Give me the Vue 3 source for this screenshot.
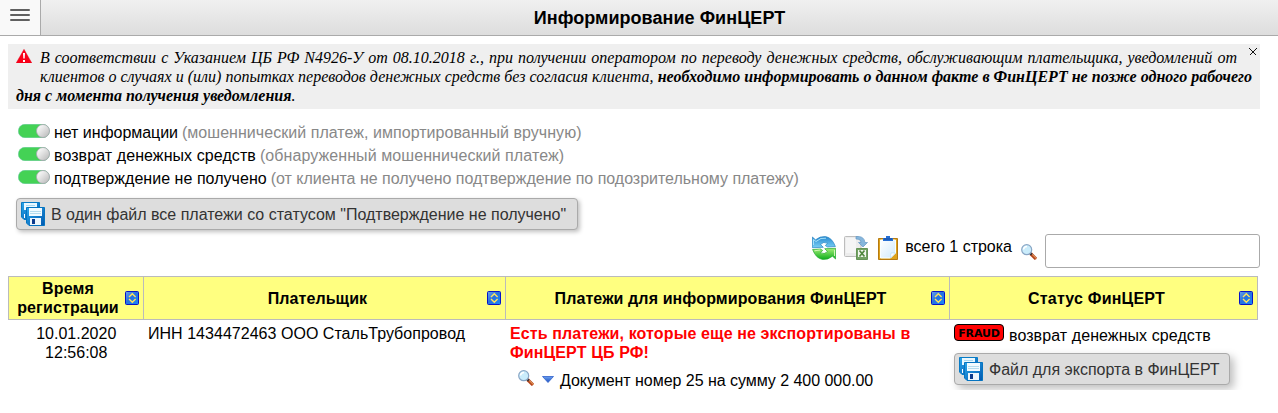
<script setup>
const filters = [
  { label: 'нет информации', hint: '(мошеннический платеж, импортированный вручную)', name: 'info' },
  { label: 'возврат денежных средств', hint: '(обнаруженный мошеннический платеж)', name: 'refund' },
  { label: 'подтверждение не получено', hint: '(от клиента не получено подтверждение по подозрительному платежу)', name: 'unconfirmed' },
]
const columns = [
  { title: 'Время регистрации', name: 'h-time' },
  { title: 'Плательщик', name: 'h-payer' },
  { title: 'Платежи для информирования ФинЦЕРТ', name: 'h-payments' },
  { title: 'Статус ФинЦЕРТ', name: 'h-status' },
]
</script>

<template>
  <svg class="defs" width="0" height="0">
    <defs>
      <linearGradient id="gBlue" x1="0" y1="0" x2="1" y2="1">
        <stop offset="0" stop-color="#2aa6ea" /><stop offset="1" stop-color="#0058b0" />
      </linearGradient>
      <linearGradient id="gSky" x1="0" y1="0" x2="0" y2="1">
        <stop offset="0" stop-color="#2687cf" /><stop offset="1" stop-color="#7ad0f6" />
      </linearGradient>
      <linearGradient id="gGreen" x1="0" y1="0" x2="0" y2="1">
        <stop offset="0" stop-color="#a5ee78" /><stop offset="1" stop-color="#0cae1c" />
      </linearGradient>
      <linearGradient id="gPaper" x1="0" y1="0" x2="1" y2="1">
        <stop offset="0" stop-color="#ffffff" /><stop offset="1" stop-color="#cfeafc" />
      </linearGradient>
      <linearGradient id="gSort" x1="0" y1="0" x2="1" y2="1">
        <stop offset="0" stop-color="#70a4e4" /><stop offset=".45" stop-color="#2772e0" /><stop offset="1" stop-color="#1587fb" />
      </linearGradient>
      <linearGradient id="gArrow" x1="0" y1="0" x2="0" y2="1">
        <stop offset="0" stop-color="#6ba0f0" /><stop offset="1" stop-color="#1c50c0" />
      </linearGradient>
      <linearGradient id="gKnob" x1="0" y1="0" x2="1" y2="1">
        <stop offset=".1" stop-color="#fdfdfd" /><stop offset=".5" stop-color="#dedede" /><stop offset="1" stop-color="#b4b4b4" />
      </linearGradient>
      <symbol id="save" viewBox="0 0 24 24">
        <path d="M.5.5h18v17H3L.5 15z" fill="url(#gBlue)" stroke="#087bc5" />
        <path d="M3 1h13v7H3z" fill="#e9f8ff" />
        <path d="M5 3.500h9" stroke="#a9d9f0" />
        <path d="M3.500 12v4" stroke="#fff" />
        <path d="M5.500 5.500h18v18H8l-2.500-2.500z" fill="url(#gBlue)" stroke="#0674c0" />
        <path d="M8 6h13v8H8z" fill="#f2fbff" />
        <path d="M9 9.500h11M9 11.500h11" stroke="#b4dcee" />
        <path d="M9 16h11v7H9z" fill="#edf6fc" />
        <path d="M11 17h3v5h-3z" fill="#0b3a8c" />
      </symbol>
      <symbol id="lens" viewBox="0 0 16 16">
        <path d="m9.500 9.500 5.500 5.500" stroke="#b5441c" stroke-width="3.200" />
        <path d="m10.500 9.800 5 5" stroke="#f1b36c" stroke-width="1" />
        <path d="m8.800 8.800 2 2" stroke="#34343c" stroke-width="2.200" />
        <circle cx="5.700" cy="5.700" r="5" fill="#caecfb" stroke="#89a6c5" stroke-width="1.200" />
        <path d="M2.500 5.500q.5-3 3.500-3" stroke="#fff" stroke-width="1.500" fill="none" />
      </symbol>
    </defs>
  </svg>

  <header class="bar">
    <div class="menu"><i></i><i></i><i></i></div>
    <h1>Информирование ФинЦЕРТ</h1>
  </header>

  <main>
    <div class="notice">
      <svg class="warn" viewBox="0 0 16 14"><path d="M8 .3 15.800 14H.2z" fill="#fa0019" stroke="#e00018" stroke-width=".4" /><path d="M7 4h2l-.3 5.500H7.300zM7 11h2v2H7z" fill="#fff" /></svg>
      <svg class="close" viewBox="0 0 8 8"><path d="m.5.5 7 7m0-7-7 7" stroke="#111" fill="none" shape-rendering="crispEdges" /></svg>
      В соответствии с Указанием ЦБ РФ N4926-У от 08.10.2018 г., при получении оператором по переводу денежных средств, обслуживающим плательщика, уведомлений от клиентов о случаях и (или) попытках переводов денежных средств без согласия клиента, <b>необходимо информировать о данном факте в ФинЦЕРТ не позже одного рабочего дня с момента получения уведомления</b>.
    </div>

    <div class="filters">
      <div v-for="f in filters" :key="f.name" class="filter" :class="f.name">
        <svg class="toggle" viewBox="0 0 32 14">
          <rect x=".3" y=".3" width="31" height="13.400" rx="6.700" fill="#44d255" stroke="#65c99a" stroke-width=".6" />
          <circle cx="25" cy="7" r="6.500" fill="url(#gKnob)" stroke="#a5a5ad" stroke-width=".8" />
        </svg>
        <span>{{ f.label }}</span><em>{{ f.hint }}</em>
      </div>
    </div>

    <button class="btn all"><svg class="disk"><use href="#save" /></svg>В один файл все платежи со статусом "Подтверждение не получено"</button>

    <div class="tools">
      <svg class="refresh" viewBox="0 0 24 24">
        <path d="M.4 1 3.500 3.800Q8 0 13.500.6 20 1.500 23.400 10.500L15.500 11l-2.200-1.500 2.300-2.200Q11.500 5 8.500 8.500l2.800 2.800L.4 11.700z" fill="url(#gSky)" stroke="#2885c3" stroke-width=".7" />
        <path d="M23.600 23l-3.100-2.800Q16 24 10.500 23.400 4 22.500.6 13.500L8.500 13l2.200 1.500-2.300 2.200q4.100 2.300 7.100-1.200l-2.800-2.800 10.900-.4z" fill="url(#gGreen)" stroke="#24a832" stroke-width=".7" />
        <path d="M1.500 9V3.500l2.500 2Q9 1 14 2.200" fill="none" stroke="#a6e2fa" />
        <path d="M2.500 14.800 8 14M22.500 14v6" fill="none" stroke="#d0f8b4" />
      </svg>
      <svg class="excel" viewBox="0 0 24 24">
        <path d="M.5 1.500q0-1 1-1H14l3 5v15H1.500q-1 0-1-1z" fill="#ececec" stroke="#bdbdbd" />
        <path d="M2 2h10v15H2z" fill="#f5f5f5" />
        <path d="M12 .5q8-1 9 6h2.500L19 11l-4.500-4.500H17Q17 3 12 3z" fill="#86b6dc" stroke="#669ac6" stroke-width=".7" />
        <path d="M12.500 12.500h11v11h-11z" fill="#73a263" stroke="#659456" />
        <path d="M14 14h8v7h-8z" fill="#f0f6ed" /><path d="m15.500 14.500 5 6m0-6-5 6" stroke="#51883f" stroke-width="1.700" />
      </svg>
      <svg class="clip" viewBox="0 0 20 24">
        <path d="M.5 2.500h19v21H.5z" fill="#dda21c" stroke="#b77b10" />
        <path d="M2.500 4h15v13l-5 5h-10z" fill="url(#gPaper)" stroke="#f8ffff" />
        <path d="m12.500 22 .5-5h4.500z" fill="#fff" stroke="#aed7f0" stroke-width=".6" />
        <path d="M5 2h3V0h4v2h3v3H5z" fill="#266fd3" /><path d="M6 3h8" stroke="#164b9c" />
      </svg>
      <span class="total">всего 1 строка</span>
      <svg class="lens search"><use href="#lens" /></svg>
      <input type="text" />
    </div>

    <table>
      <colgroup><col class="c1" /><col class="c2" /><col class="c3" /><col class="c4" /></colgroup>
      <thead>
        <tr>
          <th v-for="c in columns" :key="c.name">
            <div class="head" :class="c.name"><span>{{ c.title }}</span>
              <svg class="sort" viewBox="0 0 14 14"><rect x=".5" y=".5" width="13" height="13" rx="1" fill="url(#gSort)" stroke="#0712c9" /><path d="M4 6 7.300 2.800 10.600 6M4 8l3.300 3.200L10.600 8" fill="none" stroke="#ffe45c" stroke-width="1.400" /></svg>
            </div>
          </th>
        </tr>
      </thead>
      <tbody>
        <tr>
          <td class="date">10.01.2020<br />12:56:08</td>
          <td class="payer">ИНН 1434472463 ООО СтальТрубопровод</td>
          <td>
            <div class="alert">Есть платежи, которые еще не экспортированы в ФинЦЕРТ ЦБ РФ!</div>
            <div class="doc">
              <svg class="lens"><use href="#lens" /></svg>
              <svg class="arrow" viewBox="0 0 12 7"><path d="M.5.5h11L6 6.500z" fill="url(#gArrow)" stroke="#2f5fca" stroke-width=".8" /></svg>
              <span>Документ номер 25 на сумму 2 400 000.00</span>
            </div>
          </td>
          <td>
            <div class="status"><span class="fraud">FRAUD</span><span>возврат денежных средств</span></div>
            <button class="btn export"><svg class="disk"><use href="#save" /></svg>Файл для экспорта в ФинЦЕРТ</button>
          </td>
        </tr>
      </tbody>
    </table>
  </main>
</template>

<style>
body { margin: 0; background: #fff; overflow: hidden; }
#app { font: 16px/19px "Liberation Sans", Arial, sans-serif; color: #000; }
</style>

<style scoped>
svg { display: block; flex: none; }
.defs { position: absolute; }
.bar { display: flex; height: 35px; border-bottom: 1px solid #aaa; background: linear-gradient(#f0f0f0, #ddd); }
.menu { box-sizing: border-box; width: 41px; height: 35px; padding: 9px 10px 0; border-right: 1px solid #aaa; background: #f9f9f9; }
.menu i { display: block; height: 2px; margin-bottom: 3px; background: #606060; border-radius: 1px; }
h1 { flex: 1; margin: 0; font-size: 18px; line-height: 36px; text-align: center; letter-spacing: .05px; }
main { padding: 8px 18px 0 8px; }
.notice { height: 57px; padding: 4px 8px; background: #efefef; font: italic 16px/19px "Liberation Serif", "Times New Roman", serif; text-align: justify; }
.warn { float: left; width: 16px; height: 14px; margin: 1px 8px 8px 0; }
.close { float: right; width: 8px; height: 8px; margin: 0 -5px 0 12px; }
.filters { padding: 12px 10px 0; }
.filter { display: flex; height: 23px; white-space: nowrap; }
.toggle { width: 32px; height: 14px; margin: 3px 4px 0 0; }
.filter span { padding-top: 2px; }
.filter em { padding: 2px 0 0 4px; font-style: normal; color: #888; }
.info span { letter-spacing: -.05px; }
.info em { letter-spacing: .04px; }
.refund { letter-spacing: .08px; }
.unconfirmed span { letter-spacing: .04px; }
.unconfirmed em { letter-spacing: -.015px; }
.btn { box-sizing: border-box; display: flex; align-items: center; height: 32px; padding: 0 10px 0 4px; border: 1px solid #aaa; border-radius: 4px; background: #ddd; color: #333; font: 16px/19px "Liberation Sans", Arial, sans-serif; white-space: nowrap; }
.disk { width: 24px; height: 24px; margin-right: 6px; }
.all { width: 562px; margin: 8px 0 0 8px; box-shadow: 2px 2px 4px rgba(0, 0, 0, .25); }
.tools { display: flex; justify-content: flex-end; height: 34px; margin-top: 4px; }
.refresh, .excel { width: 24px; height: 24px; margin: 2px 8px 0 0; }
.clip { width: 20px; height: 24px; margin: 2px 7px 0 2px; }
.total { margin: 3px 9px 0 0; }
.lens { width: 16px; height: 16px; }
.search { margin: 10px 8px 0 0; }
input { box-sizing: border-box; width: 215px; height: 34px; margin: 0; border: 1px solid #aaa; border-radius: 3px; background: #fff; }
table { width: 1249px; margin-top: 8px; border-collapse: collapse; table-layout: fixed; }
.c1 { width: 135px; }
.c2 { width: 362px; }
.c3 { width: 444px; }
.c4 { width: 308px; }
th { height: 42px; padding: 0; border: 1px solid #bbb; background: #ffff80; }
.head { display: flex; align-items: center; padding: 0 4px; }
.head span { flex: 1; }
.h-time span { margin-right: 2px; letter-spacing: .15px; }
.h-payer span { letter-spacing: .08px; }
.h-payments span { letter-spacing: .11px; }
.h-status span { letter-spacing: .2px; }
.sort { width: 14px; height: 14px; }
td { padding: 4px 4px 0 4.5px; vertical-align: top; }
.date { text-align: center; }
.payer { letter-spacing: .03px; }
.alert { color: #f00; font-weight: bold; letter-spacing: .12px; }
.doc { display: flex; margin-top: 8px; padding-left: 8px; }
.arrow { width: 12px; height: 7px; margin: 6px 6px 0 8px; }
.doc span { padding-top: 1px; letter-spacing: -.04px; }
.status { display: flex; height: 29px; }
.status span + span { padding-top: 2px; letter-spacing: .08px; }
.fraud { box-sizing: border-box; width: 50px; height: 17px; margin-right: 5px; border: 1px solid #000; border-radius: 4px; background: #f00; font: bold 11px/17px "DejaVu Sans", sans-serif; letter-spacing: -.1px; text-align: center; }
.export { width: 276px; box-shadow: 4px 4px 8px rgba(0, 0, 0, .25); }
</style>
